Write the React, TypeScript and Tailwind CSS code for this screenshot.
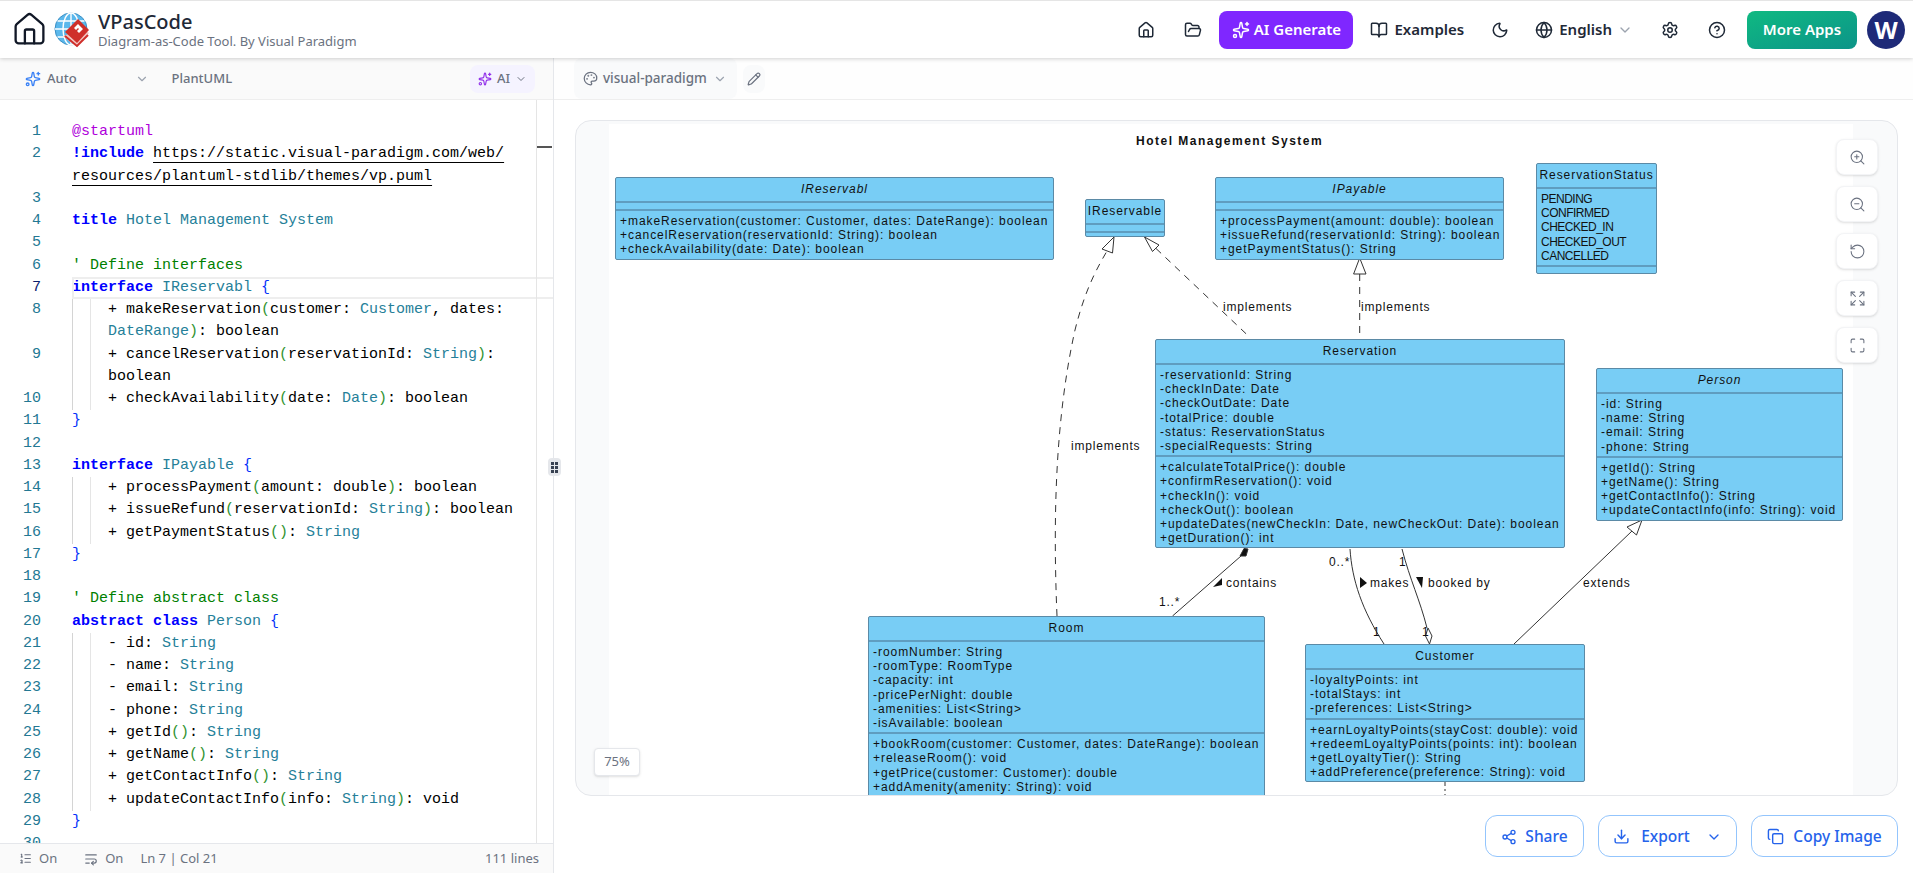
import {
  BookOpen,
  ChevronDown,
  CircleHelp,
  Copy,
  Download,
  Expand,
  FolderOpen,
  Globe,
  House,
  ListOrdered,
  Maximize,
  Moon,
  Palette,
  Pencil,
  RotateCcw,
  Settings,
  Share2,
  Sparkles,
  WrapText,
  ZoomIn,
  ZoomOut,
} from "lucide-react";

const KW = "font-bold text-[#0000ff]";
const TYPE = "text-[#267f99]";
const COMMENT = "text-[#008000]";
const BRACE = "text-[#0431fa]";
const PAREN = "text-[#319331]";

type Token = [string, string?];
type Row = { n?: number; tokens?: Token[]; guides?: boolean; pad?: boolean; active?: boolean };

const rows: Row[] = [
  { n: 1, tokens: [["@startuml", "text-[#af00db]"]] },
  {
    n: 2,
    tokens: [
      ["!include", KW],
      [" "],
      ["https://static.visual-paradigm.com/web/", "underline decoration-1 underline-offset-[5px]"],
    ],
  },
  { tokens: [["resources/plantuml-stdlib/themes/vp.puml", "underline decoration-1 underline-offset-[5px]"]] },
  { n: 3 },
  { n: 4, tokens: [["title", KW], [" "], ["Hotel Management System", TYPE]] },
  { n: 5 },
  { n: 6, tokens: [["' Define interfaces", COMMENT]] },
  { n: 7, active: true, tokens: [["interface", KW], [" "], ["IReservabl", TYPE], [" "], ["{", BRACE]] },
  {
    n: 8,
    guides: true,
    pad: true,
    tokens: [["+ makeReservation"], ["(", PAREN], ["customer: "], ["Customer", TYPE], [", dates:"]],
  },
  { guides: true, pad: true, tokens: [["DateRange", TYPE], [")", PAREN], [": boolean"]] },
  {
    n: 9,
    guides: true,
    pad: true,
    tokens: [["+ cancelReservation"], ["(", PAREN], ["reservationId: "], ["String", TYPE], [")", PAREN], [":"]],
  },
  { guides: true, pad: true, tokens: [["boolean"]] },
  {
    n: 10,
    guides: true,
    pad: true,
    tokens: [["+ checkAvailability"], ["(", PAREN], ["date: "], ["Date", TYPE], [")", PAREN], [": boolean"]],
  },
  { n: 11, tokens: [["}", BRACE]] },
  { n: 12 },
  { n: 13, tokens: [["interface", KW], [" "], ["IPayable", TYPE], [" "], ["{", BRACE]] },
  {
    n: 14,
    guides: true,
    pad: true,
    tokens: [["+ processPayment"], ["(", PAREN], ["amount: double"], [")", PAREN], [": boolean"]],
  },
  {
    n: 15,
    guides: true,
    pad: true,
    tokens: [["+ issueRefund"], ["(", PAREN], ["reservationId: "], ["String", TYPE], [")", PAREN], [": boolean"]],
  },
  { n: 16, guides: true, pad: true, tokens: [["+ getPaymentStatus"], ["()", PAREN], [": "], ["String", TYPE]] },
  { n: 17, tokens: [["}", BRACE]] },
  { n: 18 },
  { n: 19, tokens: [["' Define abstract class", COMMENT]] },
  { n: 20, tokens: [["abstract class", KW], [" "], ["Person", TYPE], [" "], ["{", BRACE]] },
  { n: 21, guides: true, pad: true, tokens: [["- id: "], ["String", TYPE]] },
  { n: 22, guides: true, pad: true, tokens: [["- name: "], ["String", TYPE]] },
  { n: 23, guides: true, pad: true, tokens: [["- email: "], ["String", TYPE]] },
  { n: 24, guides: true, pad: true, tokens: [["- phone: "], ["String", TYPE]] },
  { n: 25, guides: true, pad: true, tokens: [["+ getId"], ["()", PAREN], [": "], ["String", TYPE]] },
  { n: 26, guides: true, pad: true, tokens: [["+ getName"], ["()", PAREN], [": "], ["String", TYPE]] },
  { n: 27, guides: true, pad: true, tokens: [["+ getContactInfo"], ["()", PAREN], [": "], ["String", TYPE]] },
  {
    n: 28,
    guides: true,
    pad: true,
    tokens: [["+ updateContactInfo"], ["(", PAREN], ["info: "], ["String", TYPE], [")", PAREN], [": void"]],
  },
  { n: 29, tokens: [["}", BRACE]] },
  { n: 30 },
];

function CodeRow({ row }: { row: Row }) {
  return (
    <div className="flex h-[22.25px] leading-[22.25px]">
      <div className={`w-[41px] shrink-0 text-right ${row.active ? "text-[#0b216f]" : "text-[#237893]"}`}>
        {row.n}
      </div>
      <div
        className={`relative ml-[31px] flex-1 whitespace-pre text-black ${row.pad ? "pl-[35px]" : ""} ${
          row.guides ? "border-l border-[#d4d4d4]" : ""
        }`}
      >
        {row.guides && <span className="absolute left-[17px] top-0 h-full w-px bg-[#e5e5e5]" />}
        {row.active && <span className="absolute inset-0 -right-[16px] border-2 border-[#eeeeee]" />}
        {row.tokens?.map(([text, cls], i) => (
          <span key={i} className={cls}>
            {text}
          </span>
        ))}
      </div>
    </div>
  );
}

function Editor() {
  return (
    <aside className="flex w-[554px] shrink-0 flex-col border-r border-[#e5e7eb]">
      <div className="flex h-[42px] shrink-0 items-center border-b border-[#eeeeee] bg-[#fafafa] pl-[25px] pr-[18px] text-[13px] font-medium text-[#6b7280]">
        <Sparkles size={16} className="text-[#3b82f6]" />
        <span className="ml-[6px]">Auto</span>
        <ChevronDown size={14} className="ml-[58px] text-[#9ca3af]" />
        <span className="ml-[23px]">PlantUML</span>
        <div className="ml-auto flex h-[28px] w-[65px] items-center justify-center gap-[5px] rounded-lg bg-[#f5f3ff]">
          <Sparkles size={14} className="text-[#9333ea]" />
          <span>AI</span>
          <ChevronDown size={12} />
        </div>
      </div>
      <div className="relative min-h-0 flex-1 overflow-hidden pt-[21px] font-['Liberation_Mono',monospace] text-[15px]">
        {rows.map((row, i) => (
          <CodeRow key={i} row={row} />
        ))}
        <div className="absolute bottom-0 right-0 top-0 w-[17px] border-l border-[#e5e5e5]">
          <div className="absolute left-0 top-[46px] h-[2px] w-[15px] bg-[#555555]" />
        </div>
      </div>
      <div className="flex h-[30px] shrink-0 items-center border-t border-[#e5e7eb] bg-[#fafafa] pl-[19px] pr-[14px] text-[13px] text-[#6b7280]">
        <ListOrdered size={13} />
        <span className="ml-[7px]">On</span>
        <WrapText size={14} className="ml-[27px]" />
        <span className="ml-[7px]">On</span>
        <span className="ml-[17px]">Ln 7 | Col 21</span>
        <span className="ml-auto">111 lines</span>
      </div>
    </aside>
  );
}

function UmlBox({
  className,
  title,
  italic,
  sections,
  bodyClass,
}: {
  className: string;
  title: string;
  italic?: boolean;
  sections: string[][];
  bodyClass?: string;
}) {
  return (
    <div
      className={`absolute overflow-hidden rounded-[2px] border border-[#5b8aa6] bg-[#78cdf5] font-['Liberation_Sans',Arial,sans-serif] text-[12px] leading-[14.2px] tracking-[0.95px] text-[#111111] ${className}`}
    >
      <div className={`flex h-[23px] items-center justify-center whitespace-nowrap ${italic ? "italic" : ""}`}>
        {title}
      </div>
      {sections.map((lines, i) => (
        <div
          key={i}
          className={`min-h-[8px] whitespace-nowrap border-t-2 border-[#5f9dc0] pb-[2px] pl-[4px] pt-[3px] ${bodyClass ?? ""}`}
        >
          {lines.map((l) => (
            <div key={l}>{l}</div>
          ))}
        </div>
      ))}
    </div>
  );
}

function Edges() {
  const label = "fill-[#111111] font-['Liberation_Sans',Arial,sans-serif] text-[12px] tracking-[0.8px]";
  return (
    <svg className="absolute left-0 top-0 h-[675px] w-[1321px]" viewBox="576 121 1321 675" fill="none">
      <g stroke="#333333" strokeWidth="1">
        <path d="M1057 616C1053 520 1055 420 1075 330C1085 290 1096 270 1107 251" strokeDasharray="7 6" />
        <path d="M1114 237L1102 249L1112.5 253Z" fill="#fff" />
        <path d="M1156 248.5L1249.5 337" strokeDasharray="7 6" />
        <path d="M1144.5 237L1159 245L1152.5 251.5Z" fill="#fff" />
        <path d="M1359.7 274V339" strokeDasharray="7 6" />
        <path d="M1359.7 258L1353.6 274H1366Z" fill="#fff" />
        <path d="M1514 644L1632 531" />
        <path d="M1642 520L1627 527L1636.5 535Z" fill="#fff" />
        <path d="M1172.5 616L1241 556" />
        <path d="M1244 548.5L1248 549L1246 556L1240 556Z" fill="#111" />
        <path d="M1350 549C1352 580 1362 610 1384 644" />
        <path d="M1402 549C1410 580 1420 600 1427 628" />
        <path d="M1428 628L1432 636L1429.5 644L1425.5 636Z" fill="#fff" />
        <path d="M1445 782V791M1445 794V796" strokeDasharray="4 3" />
      </g>
      <g fill="#111">
        <path d="M1213 587L1222 578L1222 585Z" />
        <path d="M1360 577L1367 583L1360 588Z" />
        <path d="M1416 577L1423 577L1422 588Z" />
      </g>
      <text x="1071" y="450" className={label}>implements</text>
      <text x="1223" y="311" className={label}>implements</text>
      <text x="1361" y="311" className={label}>implements</text>
      <text x="1226" y="587" className={label}>contains</text>
      <text x="1370" y="587" className={label}>makes</text>
      <text x="1428" y="587" className={label}>booked by</text>
      <text x="1583" y="587" className={label}>extends</text>
      <text x="1329" y="566" className={label}>0..*</text>
      <text x="1399" y="566" className={label}>1</text>
      <text x="1159" y="606" className={label}>1..*</text>
      <text x="1373" y="636" className={label}>1</text>
      <text x="1422" y="636" className={label}>1</text>
    </svg>
  );
}

function Diagram() {
  return (
    <div className="relative min-h-0 flex-1 overflow-hidden rounded-2xl border border-[#e5e7eb] bg-[#f9fafb]">
      <div className="absolute bottom-0 left-[33px] right-[44px] top-[3px] bg-white" />
      <Edges />
      <div className="absolute left-[560px] top-[11px] whitespace-nowrap font-['Liberation_Sans',Arial,sans-serif] text-[12px] font-bold tracking-[1.5px] text-[#111111]">
        Hotel Management System
      </div>
      <UmlBox
        className="left-[39px] top-[56px] w-[439px]"
        title="IReservabl"
        italic
        sections={[
          [],
          [
            "+makeReservation(customer: Customer, dates: DateRange): boolean",
            "+cancelReservation(reservationId: String): boolean",
            "+checkAvailability(date: Date): boolean",
          ],
        ]}
      />
      <UmlBox className="left-[509px] top-[78px] h-[38px] w-[80px]" title="IReservable" sections={[[], []]} />
      <UmlBox
        className="left-[639px] top-[56px] w-[289px]"
        title="IPayable"
        italic
        sections={[
          [],
          [
            "+processPayment(amount: double): boolean",
            "+issueRefund(reservationId: String): boolean",
            "+getPaymentStatus(): String",
          ],
        ]}
      />
      <UmlBox
        className="left-[960px] top-[42px] w-[121px]"
        title="ReservationStatus"
        bodyClass="tracking-[-0.5px]"
        sections={[["PENDING", "CONFIRMED", "CHECKED_IN", "CHECKED_OUT", "CANCELLED"], []]}
      />
      <UmlBox
        className="left-[579px] top-[218px] w-[410px]"
        title="Reservation"
        sections={[
          [
            "-reservationId: String",
            "-checkInDate: Date",
            "-checkOutDate: Date",
            "-totalPrice: double",
            "-status: ReservationStatus",
            "-specialRequests: String",
          ],
          [
            "+calculateTotalPrice(): double",
            "+confirmReservation(): void",
            "+checkIn(): void",
            "+checkOut(): boolean",
            "+updateDates(newCheckIn: Date, newCheckOut: Date): boolean",
            "+getDuration(): int",
          ],
        ]}
      />
      <UmlBox
        className="left-[1020px] top-[247px] w-[247px]"
        title="Person"
        italic
        sections={[
          ["-id: String", "-name: String", "-email: String", "-phone: String"],
          ["+getId(): String", "+getName(): String", "+getContactInfo(): String", "+updateContactInfo(info: String): void"],
        ]}
      />
      <UmlBox
        className="left-[292px] top-[495px] h-[320px] w-[397px]"
        title="Room"
        sections={[
          [
            "-roomNumber: String",
            "-roomType: RoomType",
            "-capacity: int",
            "-pricePerNight: double",
            "-amenities: List<String>",
            "-isAvailable: boolean",
          ],
          [
            "+bookRoom(customer: Customer, dates: DateRange): boolean",
            "+releaseRoom(): void",
            "+getPrice(customer: Customer): double",
            "+addAmenity(amenity: String): void",
          ],
        ]}
      />
      <UmlBox
        className="left-[729px] top-[523px] w-[280px]"
        title="Customer"
        sections={[
          ["-loyaltyPoints: int", "-totalStays: int", "-preferences: List<String>"],
          [
            "+earnLoyaltyPoints(stayCost: double): void",
            "+redeemLoyaltyPoints(points: int): boolean",
            "+getLoyaltyTier(): String",
            "+addPreference(preference: String): void",
          ],
        ]}
      />
      <div className="absolute right-[19px] top-[18px] flex flex-col gap-[11px]">
        {[ZoomIn, ZoomOut, RotateCcw, Expand, Maximize].map((Icon, i) => (
          <div
            key={i}
            className="flex h-[36px] w-[42px] items-center justify-center rounded-lg border border-[#f3f4f6] bg-white text-[#6b7280] shadow-sm"
          >
            <Icon size={17} strokeWidth={1.5} />
          </div>
        ))}
      </div>
      <div className="absolute bottom-[19px] left-[18px] flex h-[28px] w-[46px] items-center justify-center rounded border border-[#e5e7eb] bg-white text-[13px] text-[#6b7280] shadow-sm">
        75%
      </div>
    </div>
  );
}

function Logo() {
  return (
    <svg width="36" height="36" viewBox="0 0 36 36" fill="none">
      <circle cx="17" cy="17" r="16" fill="#5bb8ec" stroke="#3b8fc4" />
      <g stroke="#ffffff" strokeWidth="1.4">
        <path d="M1 17H33M3.5 9H30.5M3.5 25H30.5M17 1V33" />
        <ellipse cx="17" cy="17" rx="8" ry="16" />
      </g>
      <path d="M9 24L23 35L35 21L30 17Z" fill="#f4c6c2" />
      <path d="M11 20L24 7L35 18L23 31Z" fill="#cf2f2a" />
      <path d="M20 16L24 12L29 17L25 21L23 19L25 17L24 16L22 18Z" fill="#ffffff" />
      <path d="M11 24L23 34L34 23" stroke="#cf2f2a" strokeWidth="2" />
    </svg>
  );
}

function Header() {
  return (
    <header className="relative z-10 flex h-[58px] shrink-0 items-center border-t border-[#e5e5e5] bg-white pl-[11px] pr-[8px] shadow-[0_1px_4px_rgba(0,0,0,0.18)]">
      <House size={37} strokeWidth={1.5} className="text-[#111827]" />
      <div className="ml-[6px]">
        <Logo />
      </div>
      <div className="ml-[8px] flex flex-col">
        <span className="text-[20px] font-medium leading-[23px] text-[#1f2937]">VPasCode</span>
        <span className="text-[13px] leading-[17px] text-[#6b7280]">Diagram-as-Code Tool. By Visual Paradigm</span>
      </div>
      <div className="ml-auto flex items-center text-[15px] font-semibold text-[#1f2937]">
        <House size={18} />
        <FolderOpen size={18} className="ml-[29px]" />
        <div className="ml-[17px] flex h-[38px] w-[134px] items-center justify-center gap-[4px] rounded-lg bg-[#7f27ff] text-white">
          <Sparkles size={18} />
          <span>AI Generate</span>
        </div>
        <BookOpen size={18} className="ml-[17px]" />
        <span className="ml-[6px]">Examples</span>
        <Moon size={18} className="ml-[27px]" />
        <Globe size={18} className="ml-[26px]" />
        <span className="ml-[6px]">English</span>
        <ChevronDown size={16} className="ml-[5px] text-[#9ca3af]" />
        <Settings size={18} className="ml-[28px]" />
        <CircleHelp size={18} className="ml-[29px]" />
        <div className="ml-[21px] flex h-[38px] w-[110px] items-center justify-center rounded-lg bg-gradient-to-br from-[#10b981] to-[#0d9488] text-white">
          More Apps
        </div>
        <div className="ml-[10px] flex h-[38px] w-[38px] items-center justify-center rounded-full bg-[#1e2a78] text-[24px] font-bold text-white">
          W
        </div>
      </div>
    </header>
  );
}

function ActionButton({ className, children }: { className: string; children: React.ReactNode }) {
  return (
    <button
      className={`flex h-[42px] items-center justify-center rounded-xl border border-[#93c5fd] bg-white pt-[1px] text-[15.5px] font-medium text-[#2563eb] ${className}`}
    >
      {children}
    </button>
  );
}

export default function App() {
  return (
    <div className="flex h-screen flex-col overflow-hidden bg-white font-['Noto_Sans',sans-serif]">
      <Header />
      <main className="relative flex min-h-0 flex-1">
        <Editor />
        <div className="absolute left-[548px] top-[400px] z-10 flex h-[18px] w-[13px] items-center justify-center rounded-sm bg-[#e5e7eb]">
          <div className="grid grid-cols-2 gap-[1px]">
            {[0, 1, 2, 3, 4, 5].map((i) => (
              <span key={i} className="h-[3px] w-[3px] bg-[#374151]" />
            ))}
          </div>
        </div>
        <section className="flex min-w-0 flex-1 flex-col">
          <div className="flex h-[42px] shrink-0 items-center border-b border-[#eeeeee] bg-[#fefefe] pl-[20px]">
            <div className="flex h-[41px] w-[163px] items-center rounded-lg bg-[#f9fafb] pl-[9px] text-[13.5px] font-medium text-[#6b7280]">
              <Palette size={15} />
              <span className="ml-[5px]">visual-paradigm</span>
              <ChevronDown size={14} className="ml-[6px] text-[#9ca3af]" />
            </div>
            <div className="ml-[6px] flex h-[28px] w-[22px] items-center justify-center rounded-lg bg-[#f9fafb] text-[#6b7280]">
              <Pencil size={14} />
            </div>
          </div>
          <div className="flex min-h-0 flex-1 flex-col pb-[16px] pl-[21px] pr-[15px] pt-[20px]">
            <Diagram />
            <div className="mt-[19px] flex shrink-0 justify-end gap-[14px]">
              <ActionButton className="w-[99px] gap-[8px]">
                <Share2 size={16} />
                Share
              </ActionButton>
              <ActionButton className="w-[139px]">
                <Download size={17} />
                <span className="ml-[11px]">Export</span>
                <ChevronDown size={16} className="ml-[16px]" />
              </ActionButton>
              <ActionButton className="w-[147px] gap-[9px]">
                <Copy size={17} />
                Copy Image
              </ActionButton>
            </div>
          </div>
        </section>
      </main>
    </div>
  );
}
